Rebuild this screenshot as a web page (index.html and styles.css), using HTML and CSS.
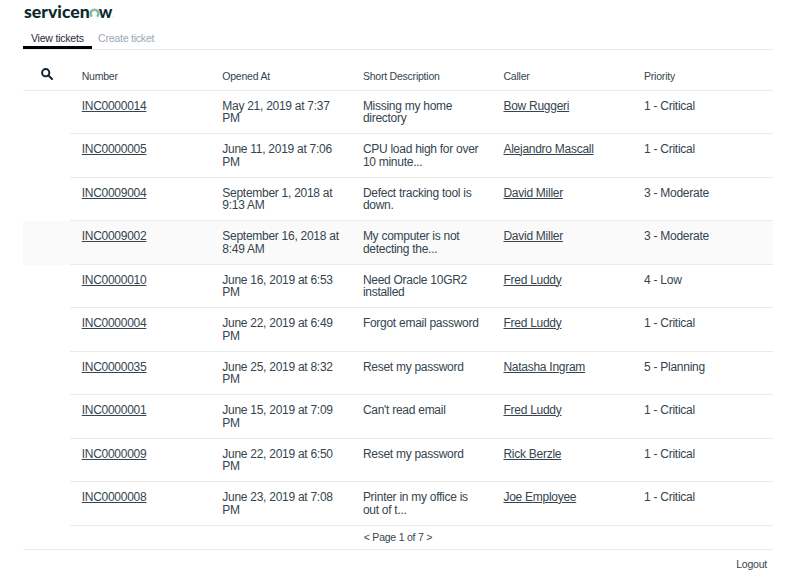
FILE: index.html
```
<!DOCTYPE html>
<html lang="en">
<head>
<meta charset="utf-8">
<title>View tickets</title>
<link rel="stylesheet" href="styles.css">
</head>
<body>
<main class="app">
  <header class="brand">
    <svg class="logo" width="96" height="26" viewBox="0 0 96 26" role="img" aria-label="servicenow">
      <text class="logo-text" x="1" y="17.6" textLength="65.8" lengthAdjust="spacingAndGlyphs">servicen</text>
      <path class="logo-o" d="M68.9 16.6A3.9 3.9 0 1 1 74.1 16.6"/>
      <text class="logo-text" x="75.8" y="17.6" textLength="13.6" lengthAdjust="spacingAndGlyphs">w</text>
      <circle class="logo-dot" cx="90" cy="17" r=".4"/>
    </svg>
  </header>
  <nav class="tabs">
    <a class="tab active">View tickets</a>
    <a class="tab">Create ticket</a>
  </nav>
  <section class="table">
    <div class="row head">
      <div class="gutter">
        <svg width="12" height="12" viewBox="0 0 12 12"><circle cx="4.7" cy="4.7" r="3.6"/><path d="M7.4 7.4L11 11"/></svg>
      </div>
      <div class="cells"><span>Number</span><span>Opened At</span><span>Short Description</span><span>Caller</span><span>Priority</span></div>
    </div>
    <div class="row"><div class="gutter"></div><div class="cells"><span><a>INC0000014</a></span><span>May 21, 2019 at 7:37<br>PM</span><span>Missing my home<br>directory</span><span><a>Bow Ruggeri</a></span><span>1 - Critical</span></div></div>
    <div class="row"><div class="gutter"></div><div class="cells"><span><a>INC0000005</a></span><span>June 11, 2019 at 7:06<br>PM</span><span>CPU load high for over<br>10 minute...</span><span><a>Alejandro Mascall</a></span><span>1 - Critical</span></div></div>
    <div class="row"><div class="gutter"></div><div class="cells"><span><a>INC0009004</a></span><span>September 1, 2018 at<br>9:13 AM</span><span>Defect tracking tool is<br>down.</span><span><a>David Miller</a></span><span>3 - Moderate</span></div></div>
    <div class="row hovered"><div class="gutter"></div><div class="cells"><span><a>INC0009002</a></span><span>September 16, 2018 at<br>8:49 AM</span><span>My computer is not<br>detecting the...</span><span><a>David Miller</a></span><span>3 - Moderate</span></div></div>
    <div class="row"><div class="gutter"></div><div class="cells"><span><a>INC0000010</a></span><span>June 16, 2019 at 6:53<br>PM</span><span>Need Oracle 10GR2<br>installed</span><span><a>Fred Luddy</a></span><span>4 - Low</span></div></div>
    <div class="row"><div class="gutter"></div><div class="cells"><span><a>INC0000004</a></span><span>June 22, 2019 at 6:49<br>PM</span><span>Forgot email password</span><span><a>Fred Luddy</a></span><span>1 - Critical</span></div></div>
    <div class="row"><div class="gutter"></div><div class="cells"><span><a>INC0000035</a></span><span>June 25, 2019 at 8:32<br>PM</span><span>Reset my password</span><span><a>Natasha Ingram</a></span><span>5 - Planning</span></div></div>
    <div class="row"><div class="gutter"></div><div class="cells"><span><a>INC0000001</a></span><span>June 15, 2019 at 7:09<br>PM</span><span>Can't read email</span><span><a>Fred Luddy</a></span><span>1 - Critical</span></div></div>
    <div class="row"><div class="gutter"></div><div class="cells"><span><a>INC0000009</a></span><span>June 22, 2019 at 6:50<br>PM</span><span>Reset my password</span><span><a>Rick Berzle</a></span><span>1 - Critical</span></div></div>
    <div class="row"><div class="gutter"></div><div class="cells"><span><a>INC0000008</a></span><span>June 23, 2019 at 7:08<br>PM</span><span>Printer in my office is<br>out of t...</span><span><a>Joe Employee</a></span><span>1 - Critical</span></div></div>
  </section>
  <div class="pager">&lt; Page 1 of 7 &gt;</div>
  <footer class="footer"><a>Logout</a></footer>
</main>
</body>
</html>
```
FILE: styles.css
```
* { box-sizing: border-box; }
body {
  margin: 0;
  background: #fff;
  color: #35444e;
  font-family: "Liberation Sans", Arial, sans-serif;
  font-size: 12px;
  letter-spacing: -0.27px;
  line-height: 12.8px;
}
.app { width: 750px; height: 576px; margin-left: 23px; }
.brand { height: 28px; }
.logo { display: block; overflow: visible; }
.logo-text { font: 900 16.5px Lato, sans-serif; letter-spacing: 0; fill: #0c2a2e; }
.logo-o { fill: none; stroke: #7fbda6; stroke-width: 2.5; }
.logo-dot { fill: #8a9699; }
.tabs {
  display: flex;
  height: 22px;
  border-bottom: 1px solid #e9eaeb;
  font-size: 10.6px;
  letter-spacing: -0.25px;
}
.tab { height: 21px; padding: 4px 6px 0; color: #9ba8b3; }
.tab.active { width: 69px; padding-left: 8px; border-bottom: 3px solid #000; color: #1f2d38; white-space: nowrap; }
.row { display: flex; height: 43.5px; }
.gutter { flex: 0 0 47px; }
.cells {
  flex: 1;
  display: grid;
  grid-template-columns: repeat(5, 140.6px);
  padding-top: 9px;
  border-bottom: 1px solid #e9eaeb;
}
.cells span { padding-left: 11.7px; white-space: nowrap; }
.cells a { text-decoration: underline; text-underline-offset: 1px; text-decoration-thickness: 1px; }
.head { height: 40.5px; border-bottom: 1px solid #e9eaeb; font-size: 10.5px; letter-spacing: -0.22px; }
.head .cells { padding-top: 20px; border-bottom: 0; }
.head .gutter { padding: 18px 0 0 18px; }
.head svg { display: block; fill: none; stroke: #14242e; stroke-width: 2; stroke-linecap: round; }
.hovered { background: #fafafa; }
.pager { height: 24px; padding-top: 5.4px; border-bottom: 1px solid #e9eaeb; text-align: center; font-size: 10.5px; letter-spacing: -0.22px; }
.footer { padding: 8px 6px 0 0; text-align: right; font-size: 10.5px; letter-spacing: -0.22px; }
```
